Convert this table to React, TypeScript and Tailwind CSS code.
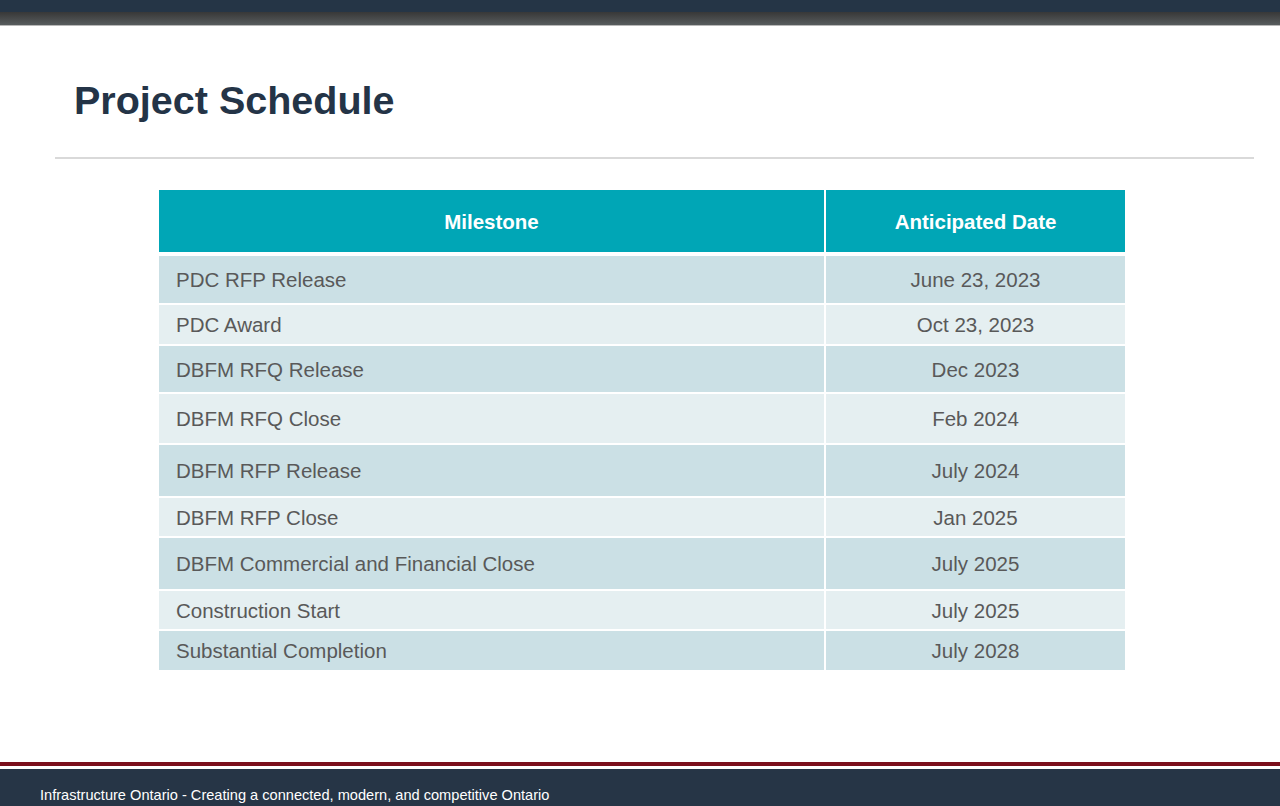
const rows = [
  { name: 'PDC RFP Release', date: 'June 23, 2023', h: 'h-[47px]' },
  { name: 'PDC Award', date: 'Oct 23, 2023', h: 'h-[39px]' },
  { name: 'DBFM RFQ Release', date: 'Dec 2023', h: 'h-[46px]' },
  { name: 'DBFM RFQ Close', date: 'Feb 2024', h: 'h-[49px]' },
  { name: 'DBFM RFP Release', date: 'July 2024', h: 'h-[51px]' },
  { name: 'DBFM RFP Close', date: 'Jan 2025', h: 'h-[38px]' },
  { name: 'DBFM Commercial and Financial Close', date: 'July 2025', h: 'h-[51px]' },
  { name: 'Construction Start', date: 'July 2025', h: 'h-[38px]' },
  { name: 'Substantial Completion', date: 'July 2028', h: 'h-[39px]' },
];

export default function App() {
  return (
    <div className="h-[806px] w-[1280px] flex flex-col bg-white font-['Liberation_Sans',Arial,sans-serif] overflow-hidden">
      {/* top bar */}
      <div className="h-[12px] bg-[#253546]" />
      <div className="h-[13px] bg-gradient-to-b from-[#383838] to-[#575c5e]" />
      <div className="h-[1px] bg-[#b8b8b8]" />

      <div className="flex-1 flex flex-col">
        <h1 className="mt-[55px] ml-[74px] text-[39.5px] leading-none font-bold text-[#243447]">
          Project Schedule
        </h1>
        <div className="mt-[36px] ml-[55px] w-[1199px] h-[2px] bg-[#d9d9d9]" />

        <div className="mt-[31px] ml-[159px] w-[966px] flex flex-col">
          <div className="grid grid-cols-[665px_1fr] gap-x-[2px] h-[62px] bg-white">
            <div className="bg-[#00a6b6] flex items-center justify-center pt-[4px] text-white font-bold text-[20.5px]">
              Milestone
            </div>
            <div className="bg-[#00a6b6] flex items-center justify-center pt-[4px] text-white font-bold text-[20.5px]">
              Anticipated Date
            </div>
          </div>
          <div className="mt-[4px] flex flex-col gap-y-[2px]">
            {rows.map((r, i) => (
              <div key={r.name} className={`grid grid-cols-[665px_1fr] gap-x-[2px] ${r.h}`}>
                <div
                  className={`${i % 2 === 0 ? 'bg-[#cbe0e5]' : 'bg-[#e5eff1]'} flex items-center pl-[17px] pt-[3px] text-[20.5px] text-[#595959]`}
                >
                  {r.name}
                </div>
                <div
                  className={`${i % 2 === 0 ? 'bg-[#cbe0e5]' : 'bg-[#e5eff1]'} flex items-center justify-center pt-[3px] text-[20.5px] text-[#595959]`}
                >
                  {r.date}
                </div>
              </div>
            ))}
          </div>
        </div>
      </div>

      {/* footer */}
      <div className="h-[4px] bg-[#7b0f1c]" />
      <div className="h-[3px] bg-white" />
      <div className="h-[37px] bg-[#263546] pt-[18px] pl-[40px]">
        <p className="text-[14.6px] leading-[16px] text-white whitespace-nowrap">
          Infrastructure Ontario - Creating a connected, modern, and competitive Ontario
        </p>
      </div>
    </div>
  );
}
